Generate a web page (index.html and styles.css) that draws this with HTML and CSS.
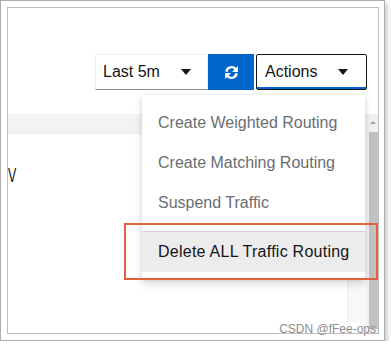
FILE: index.html
```html
<!DOCTYPE html>
<html lang="en">
<head>
    <meta charset="UTF-8">
    <meta name="viewport" content="width=device-width, initial-scale=1.0">
    <title>Traffic Routing Actions</title>
    <link rel="stylesheet" href="styles.css">
</head>
<body>
    <div class="frame">
        <div class="inner">
            <div class="toolbar">
                <button class="select-toggle">
                    <span>Last 5m</span>
                    <svg class="caret" width="10" height="6" viewBox="0 0 10 6"><polygon points="0,0 10,0 5,6" fill="#151515"/></svg>
                </button>
                <button class="refresh-btn" aria-label="Refresh">
                    <svg width="15" height="15" viewBox="0 0 16 16">
                        <path d="M2.6 7.2 A5.5 5.5 0 0 1 12.2 4.2" stroke="#fff" stroke-width="2.6" fill="none"/>
                        <polygon points="14.8,1 14.8,7.4 8.4,7.4" fill="#fff"/>
                        <path d="M13.4 8.8 A5.5 5.5 0 0 1 3.8 11.8" stroke="#fff" stroke-width="2.6" fill="none"/>
                        <polygon points="1.2,15 1.2,8.6 7.6,8.6" fill="#fff"/>
                    </svg>
                </button>
                <button class="actions-toggle">
                    <span>Actions</span>
                    <svg class="caret" width="10" height="6" viewBox="0 0 10 6"><polygon points="0,0 10,0 5,6" fill="#151515"/></svg>
                </button>
            </div>

            <div class="body">
                <div class="main">
                    <div class="band"></div>
                    <h2 class="heading">V</h2>
                    <div class="side-strip"></div>
                </div>
                <div class="scrollbar">
                    <div class="scroll-arrow"></div>
                    <div class="scroll-thumb"></div>
                </div>
            </div>

            <ul class="menu">
                <li class="menu-item disabled">Create Weighted Routing</li>
                <li class="menu-item disabled">Create Matching Routing</li>
                <li class="menu-item disabled">Suspend Traffic</li>
                <li class="menu-divider"></li>
                <li class="menu-item active">Delete ALL Traffic Routing</li>
            </ul>

            <div class="highlight"></div>
            <div class="watermark">CSDN @fFee-ops</div>
        </div>
    </div>
</body>
</html>
```

FILE: styles.css
```css
* {
    margin: 0;
    padding: 0;
    box-sizing: border-box;
    font-family: 'Liberation Sans', Arial, sans-serif;
}

body {
    background-color: #fff;
    color: #151515;
}

.frame {
    width: 385px;
    height: 341px;
    border: 1px solid #adadad;
    padding: 6px 5px 6px 6px;
    box-shadow: 3px 3px 4px rgba(0, 0, 0, 0.18);
    background-color: #fff;
}

.inner {
    position: relative;
    height: 100%;
    border: 1px solid #bdbdbd;
    display: flex;
    flex-direction: column;
}

.toolbar {
    height: 106px;
    display: flex;
    justify-content: flex-end;
    align-items: flex-start;
    padding: 46px 11px 0 0;
}

.select-toggle,
.actions-toggle {
    height: 36px;
    display: flex;
    align-items: center;
    justify-content: space-between;
    background-color: #fff;
    font-size: 16px;
    color: #151515;
    cursor: pointer;
}

.select-toggle {
    width: 113px;
    padding: 0 16px 0 7px;
    border: 1px solid #f0f0f0;
    border-bottom-color: #8a8d90;
}

.actions-toggle {
    width: 111px;
    margin-left: 2px;
    padding: 0 18px 0 8px;
    border: 1px solid #151515;
    border-radius: 2px;
    box-shadow: inset 0 -2px 0 #0066cc;
}

.caret {
    display: block;
}

.refresh-btn {
    width: 46px;
    height: 36px;
    border: none;
    background-color: #0066cc;
    display: flex;
    align-items: center;
    justify-content: center;
    cursor: pointer;
}

.body {
    flex: 1;
    display: flex;
}

.main {
    position: relative;
    flex: 1;
}

.band {
    height: 20px;
    background-color: #f3f3f3;
    border-bottom: 1px solid #ebebeb;
}

.heading {
    font-size: 20px;
    font-weight: 400;
    line-height: 20px;
    margin-top: 31px;
    transform: scaleX(0.62);
    transform-origin: left;
}

.side-strip {
    position: absolute;
    top: 20px;
    right: 0;
    bottom: 10px;
    width: 19px;
    background-color: #f8f8f8;
    border-left: 1px solid #ededed;
}

.scrollbar {
    width: 12px;
    background-color: #f1f1f1;
    display: flex;
    flex-direction: column;
    padding-bottom: 4px;
}

.scroll-arrow {
    height: 18px;
    position: relative;
}

.scroll-arrow::after {
    content: "";
    position: absolute;
    top: 7px;
    left: 4px;
    border-left: 3px solid transparent;
    border-right: 3px solid transparent;
    border-bottom: 3px solid #a3a3a3;
}

.scroll-thumb {
    flex: 1;
    margin-left: 3px;
    background-color: #c1c1c1;
}

.menu {
    position: absolute;
    left: 134px;
    top: 87px;
    width: 223px;
    list-style: none;
    background-color: #fff;
    padding: 8px 0;
    box-shadow: 0 4px 8px rgba(3, 3, 3, 0.14), 0 0 4px rgba(3, 3, 3, 0.08);
}

.menu-item {
    height: 40px;
    line-height: 40px;
    padding-left: 16px;
    font-size: 16px;
    white-space: nowrap;
}

.menu-item.disabled {
    color: #6a6e73;
}

.menu-item.active {
    color: #151515;
    background-color: #ececec;
    letter-spacing: 0.25px;
}

.menu-divider {
    margin-top: 8px;
    height: 1px;
    background-color: #d2d2d2;
}

.highlight {
    position: absolute;
    left: 116px;
    top: 215px;
    width: 254px;
    height: 57px;
    border: 2px solid #df6240;
}

.watermark {
    position: absolute;
    right: 2px;
    bottom: -3px;
    font-size: 12px;
    line-height: 14px;
    color: #8e8e8e;
}
```
